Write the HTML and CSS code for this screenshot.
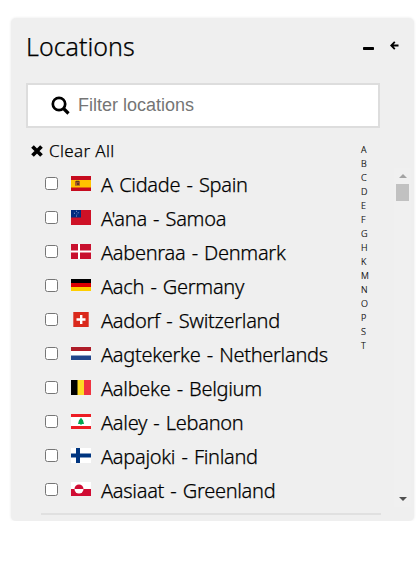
FILE: index.html
```html
<!DOCTYPE html>
<html lang="en">
<head>
<meta charset="utf-8">
<title>Locations</title>
<link rel="stylesheet" href="styles.css">
</head>
<body>
<section class="panel">
  <header class="head">
    <h1>Locations</h1>
    <svg class="minus" viewBox="0 0 11 3"><rect width="11" height="3" rx=".7"/></svg>
    <svg class="back" viewBox="0 0 9 9"><path d="M8.5 4.5H1.3M4.8.8L1.2 4.5l3.6 3.7" fill="none" stroke="#000" stroke-width="1.8"/></svg>
  </header>
  <label class="search">
    <svg viewBox="0 0 19 19"><circle cx="8" cy="8" r="6.2" fill="none" stroke="#000" stroke-width="2.7"/><path d="M12.5 12.5l5 5" stroke="#000" stroke-width="3.2"/></svg>
    <input type="text" placeholder="Filter locations">
  </label>
  <div class="content">
    <div class="main">
      <div class="clear"><svg viewBox="0 0 12 12"><path d="M1.5 1.5l9 9M10.5 1.5l-9 9" stroke="#000" stroke-width="3.7"/></svg><span>Clear All</span></div>
      <ul class="list">
        <li><input type="checkbox"><svg class="flag" viewBox="0 0 20 15"><path fill="#c60b1e" d="M0 0h20v15H0z"/><path fill="#ffc400" d="M0 4h20v7.5H0z"/><path fill="#ad5b2a" d="M4 5h5v4.8H4z"/><path fill="#5c3a20" d="M5 4.7h3v1.6H5zM6 7h2v2H6z"/></svg><span>A Cidade - Spain</span></li>
        <li><input type="checkbox"><svg class="flag" viewBox="0 0 20 15"><path fill="#ce1126" d="M0 0h20v15H0z"/><path fill="#002b7f" d="M0 0h10v7.5H0z"/><path fill="#8ba0d0" d="M5 .8h1v1H5zM3 2.8h1v1H3zM6.7 2.3h1v1h-1zM5.6 3.8h.7v.7h-.7zM5 5.5h1v1H5z"/></svg><span>A'ana - Samoa</span></li>
        <li><input type="checkbox"><svg class="flag" viewBox="0 0 20 15"><path fill="#c8102e" d="M0 0h20v15H0z"/><path fill="#fff" d="M7 0h2v15H7zM0 6.5h20v2H0z"/></svg><span>Aabenraa - Denmark</span></li>
        <li><input type="checkbox"><svg class="flag" viewBox="0 0 20 15"><path d="M0 1h20v4.5H0z"/><path fill="#d00" d="M0 5h20v4H0z"/><path fill="#ffce00" d="M0 9h20v4H0z"/></svg><span>Aach - Germany</span></li>
        <li><input type="checkbox"><svg class="flag" viewBox="0 0 20 15"><path fill="#da291c" d="M2.3 0h15.4v15H2.3z"/><path fill="#fff" d="M9 3h2.4v9H9zM5.5 6.2h9v2.6h-9z"/></svg><span>Aadorf - Switzerland</span></li>
        <li><input type="checkbox"><svg class="flag" viewBox="0 0 20 15"><path fill="#fff" d="M0 .8h20v13.4H0z"/><path fill="#ae1c28" d="M0 1h20v4H0z"/><path fill="#21468b" d="M0 9.5h20V14H0z"/></svg><span>Aagtekerke - Netherlands</span></li>
        <li><input type="checkbox"><svg class="flag" viewBox="0 0 20 15"><path d="M0 0h7v15H0z"/><path fill="#fdda24" d="M6.5 0H13v15H6.5z"/><path fill="#ef3340" d="M13 0h7v15h-7z"/></svg><span>Aalbeke - Belgium</span></li>
        <li><input type="checkbox"><svg class="flag" viewBox="0 0 20 15"><path fill="#fff" d="M0 0h20v15H0z"/><path fill="#ed1c24" d="M0 0h20v3H0zM0 12h20v3H0z"/><path fill="#00a651" d="M10 3.8l2 2.4 1 3.8h-2.5v1h-1v-1H7l1-3.8z"/></svg><span>Aaley - Lebanon</span></li>
        <li><input type="checkbox"><svg class="flag" viewBox="0 0 20 15"><path fill="#fff" d="M0 0h20v15H0z"/><path fill="#003580" d="M5 0h4v15H5zM0 5.5h20v4H0z"/></svg><span>Aapajoki - Finland</span></li>
        <li><input type="checkbox"><svg class="flag" viewBox="0 0 20 15"><path fill="#fff" d="M0 0h20v14H0z"/><path fill="#d00c33" d="M0 7h20v7H0zM3.5 7a4.5 4.5 0 0 1 9 0z"/><path fill="#fff" d="M3.5 7h9a4.5 4.5 0 0 1-9 0z"/></svg><span>Aasiaat - Greenland</span></li>
      </ul>
    </div>
    <nav class="letters"><span>A</span><span>B</span><span>C</span><span>D</span><span>E</span><span>F</span><span>G</span><span>H</span><span>K</span><span>M</span><span>N</span><span>O</span><span>P</span><span>S</span><span>T</span></nav>
    <div class="scroll">
      <svg viewBox="0 0 8 4"><path fill="#a3a3a3" d="M4 0l4 4H0z"/></svg>
      <div class="thumb"></div>
      <svg class="down" viewBox="0 0 8 4"><path fill="#505050" d="M0 0h8L4 4z"/></svg>
    </div>
  </div>
</section>
</body>
</html>
```
FILE: styles.css
```css
* { box-sizing: border-box; }
body {
  margin: 0;
  background: #fff;
  color: #000;
  font-family: "Noto Sans", "Open Sans", sans-serif;
}
svg { display: block; flex: none; }
.panel {
  width: 403px;
  height: 503px;
  margin: 18px 0 0 11px;
  padding: 0 3px 0 15px;
  background: #efefef;
  border-radius: 5px;
  box-shadow: 0 0 3px #e8e8e8;
  overflow: hidden;
}
.head { display: flex; height: 65px; }
h1 {
  flex: 1;
  margin: 10px 0 0;
  font-size: 25px;
  line-height: 36px;
  font-weight: 300;
  -webkit-text-stroke: .25px #000;
}
.minus { width: 11px; height: 3px; margin: 29px 16px 0 0; }
.back { width: 9px; height: 9px; margin: 23px 12px 0 0; }
.search {
  display: flex;
  align-items: center;
  width: 354px;
  height: 45px;
  padding-left: 23px;
  background: #fff;
  border: 2px solid #ddd;
}
.search svg { width: 19px; height: 19px; }
.search input {
  width: 280px;
  margin-left: 8px;
  padding: 0 0 1px;
  border: 0;
  outline: 0;
  font: 18px "Liberation Sans", sans-serif;
}
.search input::placeholder { color: #757575; }
.content { display: flex; height: 393px; }
.main { width: 335px; padding-top: 6px; }
.clear { display: flex; align-items: center; height: 33px; padding-left: 5px; }
.clear svg { width: 12px; height: 12px; margin-right: 6px; }
.clear span {
  padding-bottom: 1px;
  font-size: 17px;
  font-weight: 300;
  letter-spacing: .35px;
  -webkit-text-stroke: .25px #000;
}
.list {
  width: 340px;
  height: 348px;
  margin: 0 0 0 15px;
  padding: 0;
  list-style: none;
  border-bottom: 2px solid #e0e0e0;
}
.list li { display: flex; height: 34px; padding: 0 0 0 4px; }
.list input { width: 13px; height: 13px; margin: 10px 13px 0 0; }
.flag { width: 20px; height: 15px; margin: 9px 10px 0 0; }
.list span {
  font-size: 20px;
  line-height: 36px;
  font-weight: 300;
  letter-spacing: -.3px;
  word-spacing: 1.4px;
  white-space: nowrap;
  -webkit-text-stroke: .25px #000;
}
.letters {
  display: flex;
  flex-direction: column;
  width: 33px;
  padding-top: 15px;
  font-size: 9px;
  font-weight: 300;
  line-height: 14px;
  -webkit-text-stroke: .15px #000;
}
.scroll {
  display: flex;
  flex-direction: column;
  align-items: center;
  width: 17px;
  height: 339px;
  margin-top: 40px;
  padding: 6px 0;
  background: #f0f0f0;
}
.scroll svg { width: 8px; height: 4px; }
.thumb { width: 13px; height: 17px; margin-top: 6px; background: #c1c1c1; }
.scroll .down { margin-top: auto; }
```
